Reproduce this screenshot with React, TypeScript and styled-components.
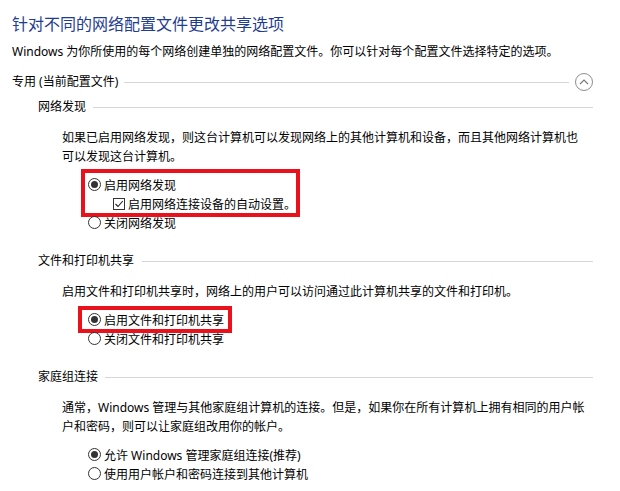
import styled, { createGlobalStyle } from "styled-components";

const GlobalStyle = createGlobalStyle`
  * { box-sizing: border-box; }
  body {
    margin: 0;
    background: #ffffff;
  }
`;

const Page = styled.div`
  width: 620px;
  height: 491px;
  overflow: hidden;
  padding: 13px 27px 0 12px;
  font-family: "Noto Sans", "Noto Sans CJK SC", sans-serif;
  font-size: 12px;
  color: #000;
`;

const Title = styled.h1`
  margin: 0;
  font-size: 16px;
  font-weight: normal;
  line-height: 22px;
  color: #1f3d8f;
  white-space: nowrap;
`;

const Intro = styled.p`
  margin: 8px 0 0;
  line-height: 18px;
  white-space: nowrap;
`;

const ProfileHeader = styled.div`
  display: flex;
  align-items: center;
  margin-top: 12px;
  line-height: 18px;
`;

const Rule = styled.div<{ $gap: number }>`
  flex: 1;
  height: 1px;
  margin-left: ${({ $gap }) => $gap}px;
  background: #d6d6d6;
`;

const CollapseButton = styled.button`
  display: grid;
  place-items: center;
  width: 18px;
  height: 18px;
  margin-left: 6px;
  padding: 0;
  border: 1px solid #8e8e8e;
  border-radius: 50%;
  background: #fff;
`;

const Groups = styled.div`
  display: flex;
  flex-direction: column;
  gap: 20px;
  margin-top: 7px;
  padding-left: 26px;
`;

const GroupHeader = styled.div`
  display: flex;
  align-items: center;
  line-height: 18px;
  white-space: nowrap;
`;

const GroupBody = styled.div`
  padding: 12px 0 0 24px;
`;

const Description = styled.p`
  margin: 0;
  line-height: 19px;
  white-space: nowrap;
`;

const Options = styled.div`
  display: flex;
  flex-direction: column;
  margin-top: 9px;
  padding-left: 26px;
`;

const OptionRow = styled.div<{ $indent?: number }>`
  display: flex;
  align-items: center;
  height: 19px;
  padding-left: ${({ $indent = 0 }) => $indent}px;
  white-space: nowrap;
`;

const Radio = styled.span<{ $checked?: boolean }>`
  display: grid;
  place-items: center;
  width: 13px;
  height: 13px;
  border: 1px solid #333;
  border-radius: 50%;
  flex-shrink: 0;

  &::after {
    content: "";
    width: 7px;
    height: 7px;
    border-radius: 50%;
    background: ${({ $checked }) => ($checked ? "#333" : "transparent")};
  }
`;

const Box = styled.span`
  display: grid;
  place-items: center;
  width: 12px;
  height: 12px;
  border: 1px solid #333;
  flex-shrink: 0;
`;

const OptionLabel = styled.span`
  margin-left: 3px;
`;

// red annotation frame drawn round some options; negative margins keep the rows in place
const Highlight = styled.div<{ $top: number; $left: number; $right: number }>`
  width: fit-content;
  border: 4px solid #e8111c;
  margin: ${({ $top, $left }) => `-${$top + 4}px 0 -4px -${$left + 4}px`};
  padding: ${({ $top, $left, $right }) => `${$top}px ${$right}px 0 ${$left}px`};
`;

function ChevronUp() {
  return (
    <svg width="10" height="6" viewBox="0 0 10 6">
      <polyline points="1,5 5,1 9,5" fill="none" stroke="#7a7a7a" strokeWidth="1.2" />
    </svg>
  );
}

function CheckMark() {
  return (
    <svg width="10" height="10" viewBox="0 0 10 10">
      <polyline points="1.5,5 4,7.5 8.8,2" fill="none" stroke="#222" strokeWidth="1.1" />
    </svg>
  );
}

function RadioOption({ label, checked }: { label: string; checked?: boolean }) {
  return (
    <OptionRow>
      <Radio $checked={checked} />
      <OptionLabel>{label}</OptionLabel>
    </OptionRow>
  );
}

export default function App() {
  return (
    <>
      <GlobalStyle />
      <Page>
        <Title>针对不同的网络配置文件更改共享选项</Title>
        <Intro>Windows 为你所使用的每个网络创建单独的网络配置文件。你可以针对每个配置文件选择特定的选项。</Intro>

        <ProfileHeader>
          <span>专用 (当前配置文件)</span>
          <Rule $gap={6} />
          <CollapseButton>
            <ChevronUp />
          </CollapseButton>
        </ProfileHeader>

        <Groups>
          <section>
            <GroupHeader>
              <span>网络发现</span>
              <Rule $gap={7} />
            </GroupHeader>
            <GroupBody>
              <Description>
                如果已启用网络发现，则这台计算机可以发现网络上的其他计算机和设备，而且其他网络计算机也
                <br />
                可以发现这台计算机。
              </Description>
              <Options>
                <Highlight $top={2} $left={3} $right={0}>
                  <RadioOption label="启用网络发现" checked />
                  <OptionRow $indent={25}>
                    <Box>
                      <CheckMark />
                    </Box>
                    <OptionLabel>启用网络连接设备的自动设置。</OptionLabel>
                  </OptionRow>
                </Highlight>
                <RadioOption label="关闭网络发现" />
              </Options>
            </GroupBody>
          </section>

          <section>
            <GroupHeader>
              <span>文件和打印机共享</span>
              <Rule $gap={8} />
            </GroupHeader>
            <GroupBody>
              <Description>启用文件和打印机共享时，网络上的用户可以访问通过此计算机共享的文件和打印机。</Description>
              <Options>
                <Highlight $top={0} $left={6} $right={4}>
                  <RadioOption label="启用文件和打印机共享" checked />
                </Highlight>
                <RadioOption label="关闭文件和打印机共享" />
              </Options>
            </GroupBody>
          </section>

          <section>
            <GroupHeader>
              <span>家庭组连接</span>
              <Rule $gap={7} />
            </GroupHeader>
            <GroupBody>
              <Description>
                通常，Windows 管理与其他家庭组计算机的连接。但是，如果你在所有计算机上拥有相同的用户帐
                <br />
                户和密码，则可以让家庭组改用你的帐户。
              </Description>
              <Options>
                <RadioOption label="允许 Windows 管理家庭组连接(推荐)" checked />
                <RadioOption label="使用用户帐户和密码连接到其他计算机" />
              </Options>
            </GroupBody>
          </section>
        </Groups>
      </Page>
    </>
  );
}
